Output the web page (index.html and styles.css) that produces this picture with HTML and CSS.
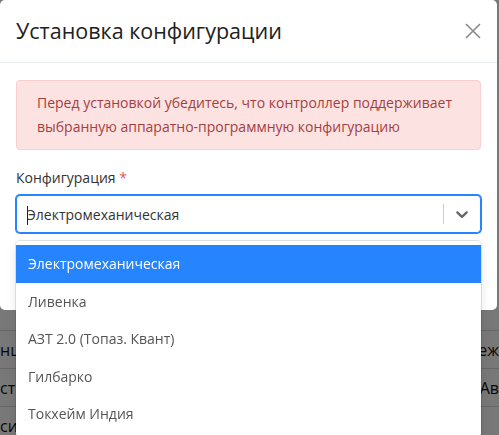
FILE: index.html
```html
<!DOCTYPE html>
<html lang="ru">
<head>
<meta charset="utf-8">
<title>Установка конфигурации</title>
<link rel="stylesheet" href="styles.css">
</head>
<body>
<div class="page">
  <div class="table">
    <div class="row first"><span class="cell-l">нц</span><span class="cell-r">еж</span></div>
    <div class="row"><span class="cell-l">ст</span><span class="cell-r">Ав</span></div>
    <div class="row"><span class="cell-l">си</span><span class="cell-r"></span></div>
  </div>
</div>
<div class="backdrop">
  <div class="modal">
    <div class="modal-header">
      <h2 class="modal-title">Установка конфигурации</h2>
      <button class="close" type="button" aria-label="Закрыть">
        <svg width="16" height="16" viewBox="0 0 16 16"><path d="M1 1L15 15M15 1L1 15" stroke="#8a8a8a" stroke-width="1.6" fill="none"/></svg>
      </button>
    </div>
    <div class="modal-body">
      <div class="alert">Перед установкой убедитесь, что контроллер поддерживает выбранную аппаратно-программную конфигурацию</div>
      <div class="label">Конфигурация <span class="req">*</span></div>
      <div class="select">
        <div class="control">
          <div class="value"><span class="caret"></span>Электромеханическая</div>
          <div class="indicators">
            <span class="sep"></span>
            <span class="chev">
              <svg width="20" height="20" viewBox="0 0 20 20"><path fill="#666" d="M4.516 7.548c0.436-0.446 1.043-0.481 1.576 0l3.908 3.747 3.908-3.747c0.533-0.481 1.141-0.446 1.574 0 0.436 0.445 0.408 1.197 0 1.615-0.406 0.418-4.695 4.502-4.695 4.502-0.217 0.223-0.502 0.335-0.787 0.335s-0.57-0.112-0.789-0.335c0 0-4.287-4.084-4.695-4.502s-0.436-1.17 0-1.615z"/></svg>
            </span>
          </div>
        </div>
        <div class="menu">
          <div class="option selected">Электромеханическая</div>
          <div class="option">Ливенка</div>
          <div class="option">АЗТ 2.0 (Топаз. Квант)</div>
          <div class="option">Гилбарко</div>
          <div class="option">Токхейм Индия</div>
        </div>
      </div>
    </div>
  </div>
</div>
</body>
</html>
```

FILE: styles.css
```css
* { box-sizing: border-box; }
html, body { margin: 0; padding: 0; }
body {
  font-family: "Open Sans", "Noto Sans", sans-serif;
  background: #fff;
  width: 499px;
  height: 435px;
  overflow: hidden;
  color: #222;
}
.page { padding-top: 330px; }
.table { font-size: 16px; }
.row {
  display: flex;
  justify-content: space-between;
  height: 38px;
  line-height: 38px;
  border-top: 1px solid #d8d8d8;
  color: #111;
}

.backdrop {
  position: fixed;
  inset: 0;
  background: rgba(0, 0, 0, 0.53);
}
.modal {
  width: 497px;
  height: 310px;
  background: #fff;
  border-radius: 5px;
}
.modal-header {
  display: flex;
  align-items: center;
  justify-content: space-between;
  padding: 16px;
  border-bottom: 1px solid #e9ecef;
}
.modal-title {
  margin: 0;
  font-size: 21.5px;
  line-height: 30px;
  font-weight: 400;
  color: #212121;
}
.close {
  border: 0;
  background: none;
  padding: 0;
  width: 16px;
  height: 16px;
  display: flex;
}
.modal-body { padding: 17px 16px 16px; }
.alert {
  background: #fde2e2;
  border: 1px solid #f9cfcf;
  border-radius: 4px;
  color: #a43f3f;
  font-size: 14px;
  line-height: 24px;
  padding: 10px 20px;
}
.label {
  margin-top: 16px;
  font-size: 14px;
  line-height: 24px;
  color: #333;
}
.req { color: #e25858; }
.select { position: relative; margin-top: 5px; }
.control {
  display: flex;
  align-items: center;
  min-height: 38px;
  border: 1px solid #2684ff;
  box-shadow: 0 0 0 1px #2684ff;
  border-radius: 4px;
  background: #fff;
}
.value {
  flex: 1;
  position: relative;
  padding: 2px 10px;
  font-size: 14px;
  color: #333;
}
.caret {
  position: absolute;
  left: 10px;
  top: 3px;
  width: 1px;
  height: 19px;
  background: #222;
}
.indicators { display: flex; align-items: center; align-self: stretch; }
.sep {
  width: 1px;
  align-self: stretch;
  margin: 8px 0;
  background: #ccc;
}
.chev { display: flex; padding: 8px; }
.menu {
  position: absolute;
  top: 46px;
  left: 0;
  right: 0;
  background: #fff;
  border-radius: 4px;
  padding: 4px 0;
  box-shadow: 0 0 0 1px rgba(0,0,0,0.1), 0 4px 11px rgba(0,0,0,0.1);
}
.option {
  padding: 8px 12px;
  line-height: 21.6px;
  font-size: 14px;
  color: #555;
}
.option.selected { background: #2684ff; color: #fff; }
```
